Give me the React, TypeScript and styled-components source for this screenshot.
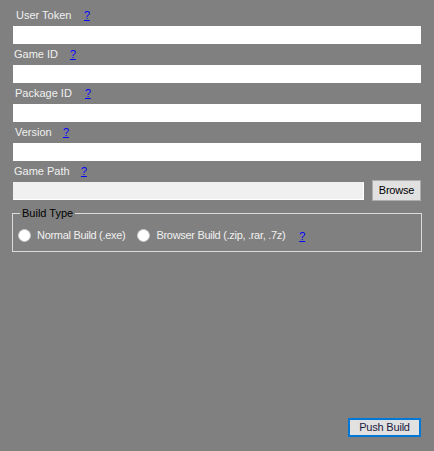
import styled, { createGlobalStyle } from 'styled-components';

const GlobalStyle = createGlobalStyle`
  html, body {
    margin: 0;
    padding: 0;
    background: #808080;
  }
  body {
    font-family: "Liberation Sans", Arial, sans-serif;
    font-size: 11px;
    letter-spacing: -0.3px;
  }
`;

const Window = styled.div`
  display: flex;
  flex-direction: column;
  box-sizing: border-box;
  width: 434px;
  height: 451px;
  padding: 9px 13px 14px 13px;
  background: #808080;
`;

const Field = styled.div`
  display: flex;
  flex-direction: column;
  gap: 4px;
  margin-bottom: 4px;
`;

const CaptionRow = styled.div<{ $x: number }>`
  display: flex;
  align-items: center;
  height: 13px;
  line-height: 13px;
  padding-left: ${(p) => p.$x - 13}px;
`;

const Caption = styled.span<{ $width: number }>`
  display: inline-block;
  width: ${(p) => p.$width}px;
  color: #f0f0f0;
  white-space: nowrap;
  letter-spacing: 0;
`;

const Help = styled.a`
  color: #0000ff;
  text-decoration: underline;
  cursor: pointer;
`;

const TextBox = styled.input<{ $readOnly?: boolean }>`
  box-sizing: border-box;
  display: block;
  width: 100%;
  height: 18px;
  margin: 0;
  padding: 0 2px;
  border: none;
  outline: none;
  background: ${(p) => (p.$readOnly ? '#f0f0f0' : '#ffffff')};
  font: inherit;
`;

const PathRow = styled.div`
  display: flex;
  align-items: center;
  gap: 8px;
  height: 21px;
  margin-top: -2px;
`;

const PathBox = styled(TextBox)`
  flex: 1;
  width: auto;
  border: 1px solid #ffffff;
  border-left-color: #f0f0f0;
  border-top-color: #f0f0f0;
`;

const WinButton = styled.button<{ $focused?: boolean }>`
  box-sizing: border-box;
  width: ${(p) => (p.$focused ? 73 : 49)}px;
  height: ${(p) => (p.$focused ? 19 : 21)}px;
  margin: 0;
  padding: 0;
  border: ${(p) => (p.$focused ? '2px solid #0078d7' : '1px solid #adadad')};
  background: #e1e1e1;
  color: ${(p) => (p.$focused ? '#1a1a40' : '#000000')};
  font-family: "Liberation Sans", Arial, sans-serif;
  font-size: 11px;
  letter-spacing: -0.2px;
  line-height: 1;
`;

const Group = styled.fieldset`
  margin: 2px -1px 0 -1px;
  padding: 0 0 0 5px;
  border: 1px solid #dcdcdc;
  border-radius: 0;
`;

const Legend = styled.legend`
  margin-left: 2px;
  padding: 0 2px;
  line-height: 13px;
  color: #000000;
  letter-spacing: 0;
`;

const Options = styled.div`
  display: flex;
  align-items: center;
  height: 13px;
  padding: 9px 0 9px 0;
`;

const Option = styled.label<{ $gap: number }>`
  display: flex;
  align-items: center;
  gap: 6px;
  margin-right: ${(p) => p.$gap}px;
  color: #f0f0f0;
  line-height: 13px;
  white-space: nowrap;
`;

const Radio = styled.input`
  appearance: none;
  box-sizing: border-box;
  width: 13px;
  height: 13px;
  margin: 0;
  border: 1px solid #c8c8c8;
  border-radius: 50%;
  background: #ffffff;
`;

const Footer = styled.div`
  display: flex;
  justify-content: flex-end;
  margin-top: auto;
`;

const fields = [
  { label: 'User Token', x: 16, help: 84 },
  { label: 'Game ID', x: 14, help: 70 },
  { label: 'Package ID', x: 15, help: 85 },
  { label: 'Version', x: 15, help: 63 },
];

export default function App() {
  return (
    <>
      <GlobalStyle />
      <Window>
        {fields.map((f) => (
          <Field key={f.label}>
            <CaptionRow $x={f.x}>
              <Caption $width={f.help - f.x}>{f.label}</Caption>
              <Help>?</Help>
            </CaptionRow>
            <TextBox />
          </Field>
        ))}
        <Field>
          <CaptionRow $x={14}>
            <Caption $width={81 - 14}>Game Path</Caption>
            <Help>?</Help>
          </CaptionRow>
          <PathRow>
            <PathBox $readOnly readOnly />
            <WinButton>Browse</WinButton>
          </PathRow>
        </Field>
        <Group>
          <Legend>Build Type</Legend>
          <Options>
            <Option $gap={12}>
              <Radio type="radio" name="build" />
              Normal Build (.exe)
            </Option>
            <Option $gap={14}>
              <Radio type="radio" name="build" />
              Browser Build (.zip, .rar, .7z)
            </Option>
            <Help>?</Help>
          </Options>
        </Group>
        <Footer>
          <WinButton $focused>Push Build</WinButton>
        </Footer>
      </Window>
    </>
  );
}
